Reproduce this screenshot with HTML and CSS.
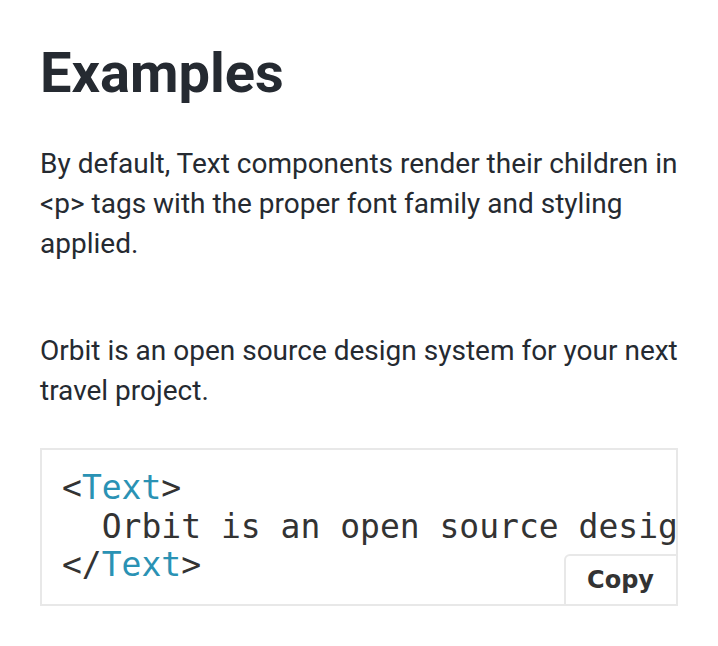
FILE: index.html
```html
<!DOCTYPE html>
<html>
<head>
<meta charset="utf-8">
<link rel="stylesheet" href="styles.css">
</head>
<body>
<main class="page">
  <h1 class="title">Examples</h1>
  <p class="text">By default, Text components render their children in &lt;p&gt; tags with the proper font family and styling applied.</p>
  <p class="text example">Orbit is an open source design system for your next travel project.</p>
  <div class="code-box">
    <pre class="code">&lt;<span class="tag">Text</span>&gt;
  Orbit is an open source design system for your next travel project.
&lt;/<span class="tag">Text</span>&gt;</pre>
    <button class="copy">Copy</button>
  </div>
</main>
</body>
</html>
```
FILE: styles.css
```css
html, body {
  margin: 0;
  padding: 0;
  background: #ffffff;
}
.page {
  width: 638px;
  padding: 41px 0 0 40px;
  font-family: Roboto, "Liberation Sans", sans-serif;
  color: #252a31;
}
.title {
  margin: 0;
  font-size: 56px;
  font-weight: 700;
  line-height: 64px;
}
.text {
  margin: 39px 0 0;
  font-size: 28px;
  line-height: 40px;
}
.example {
  margin-top: 67px;
}
.code-box {
  position: relative;
  margin-top: 37px;
  border: 2px solid #e8e8e8;
  overflow: hidden;
}
.code {
  margin: 0;
  padding: 19px 20px;
  font-family: "DejaVu Sans Mono", monospace;
  font-size: 33px;
  line-height: 38.5px;
  color: #333333;
  white-space: pre;
  overflow: hidden;
}
.tag {
  color: #2a92b4;
}
.copy {
  position: absolute;
  right: -30px;
  bottom: 0;
  height: 50px;
  padding: 0 50px 0 21px;
  border: 2px solid #e8e8e8;
  border-bottom: none;
  border-radius: 6px 6px 0 0;
  background: #ffffff;
  font-family: "DejaVu Sans", sans-serif;
  font-weight: 700;
  font-size: 24px;
  color: #333333;
}
```
